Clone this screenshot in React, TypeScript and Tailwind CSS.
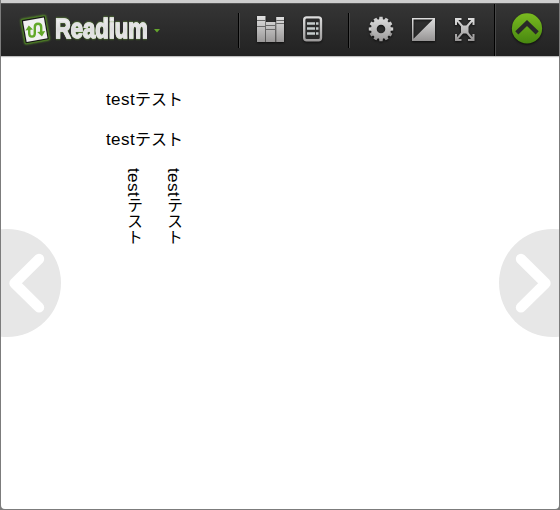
import React from 'react';

function Divider() {
  return <div className="h-[35px] w-[2px] shrink-0 border-l border-black bg-[#484848]" />;
}

function Metal({ id, y1, y2 }: { id: string; y1: number; y2: number }) {
  return (
    <defs>
      <linearGradient id={id} gradientUnits="userSpaceOnUse" x1="0" y1={y1} x2="0" y2={y2}>
        <stop offset="0" stopColor="#dedede" />
        <stop offset="1" stopColor="#969494" />
      </linearGradient>
    </defs>
  );
}

const shadow = 'overflow-visible drop-shadow-[0_1px_1px_rgba(0,0,0,0.7)]';

function LogoMark() {
  return (
    <svg width="34" height="34" viewBox="0 0 34 34" className="shrink-0 drop-shadow-[0_0_1px_#62a52a]">
      <g transform="rotate(-10 17 17)">
        <rect x="5" y="4.5" width="24.5" height="24.5" rx="1" fill="#171717" stroke="#4c7b26" strokeWidth="1" />
        <rect x="6.7" y="6.2" width="21.2" height="21.2" fill="#f0f0f0" />
      </g>
      <path d="M11.2 16v4.2c0 4.6 5.6 4.6 5.6 0v-6c0-4.6 6.4-4.6 6.4 0V19" fill="none" stroke="#62a829" strokeWidth="2.4" />
      <path d="M7.4 17.4l3.4-5 4.2 4.2zM19.2 19l8-.9-3.2 5.4z" fill="#62a829" />
    </svg>
  );
}

function LibraryIcon() {
  return (
    <svg width="28" height="28" viewBox="0 0 28 28" className={shadow}>
      <Metal id="books" y1={1} y2={27} />
      <path d="M0 0h8.5v26H0zM9 6h9.5v20H9zM19.2 1H27v25h-7.8z" fill="url(#books)" />
      <path d="M0 4.5h8.5M0 10.5h8.5M9 9.5h9.5M9 13.5h9.5M19.2 4.5H27M19.2 7.5H27" stroke="#686868" />
    </svg>
  );
}

function ContentsIcon() {
  return (
    <svg width="20" height="26" viewBox="0 0 20 26" className={shadow}>
      <Metal id="toc" y1={0} y2={26} />
      <rect x="1.2" y="0.4" width="16.8" height="22.8" rx="2.5" fill="#292929" stroke="url(#toc)" strokeWidth="2.4" />
      <path d="M4 6.5h8M13 6.5h2.5M4 11.5h8M13 11.5h2.5M4 16.5h8M13 16.5h2.5" stroke="#c5cbcc" strokeWidth="2.3" />
    </svg>
  );
}

function GearIcon() {
  const teeth = Array.from({ length: 12 }, (_, i) => i * 30);
  return (
    <svg width="26" height="26" viewBox="0 0 26 26" className={shadow}>
      <Metal id="gear" y1={0} y2={26} />
      {teeth.map((a) => (
        <path key={a} d="M10.9 4l.5-4.2h3.2L15.1 4z" fill={a > 90 && a < 270 ? '#9c9a9a' : '#cfcfcf'} transform={`rotate(${a} 13 12)`} />
      ))}
      <circle cx="13" cy="12" r="7.2" fill="none" stroke="url(#gear)" strokeWidth="5.8" />
    </svg>
  );
}

function ContrastIcon() {
  return (
    <svg width="24" height="24" viewBox="0 0 24 24" className={shadow}>
      <Metal id="contrast" y1={0} y2={23} />
      <path fillRule="evenodd" d="M0 0h23v23H0zM1.5 1.5v19.3L20.8 1.5z" fill="url(#contrast)" />
    </svg>
  );
}

function FullscreenIcon() {
  return (
    <svg width="20" height="24" viewBox="0 0 20 24" className={shadow}>
      <Metal id="full" y1={0} y2={23} />
      <path
        d="M1 7V1h5.5M13 1h5.5v6M1 16v6h5.5M13 22h5.5v-6M1.5 1.5l6 7M18 1.5l-6 7M1.5 21.5l6-7M18 21.5l-6-7"
        fill="none"
        stroke="url(#full)"
        strokeWidth="2"
      />
      <rect x="6" y="7.5" width="7.5" height="8" fill="url(#full)" />
    </svg>
  );
}

function CollapseIcon() {
  return (
    <svg width="32" height="32" viewBox="0 0 32 32" className={shadow}>
      <defs>
        <linearGradient id="green" x1="0" y1="0" x2="0" y2="1">
          <stop offset="0" stopColor="#7abb20" />
          <stop offset="1" stopColor="#478710" />
        </linearGradient>
      </defs>
      <circle cx="16" cy="14.4" r="15.1" fill="url(#green)" />
      <path d="M5.8 18.9L16 9l10.2 9.9" fill="none" stroke="#292929" strokeWidth="4.4" />
    </svg>
  );
}

function PageArrow({ flip = false }: { flip?: boolean }) {
  return (
    <svg width="60" height="108" viewBox="0 0 60 108" className={flip ? 'block -scale-x-100' : 'block'}>
      <circle cx="6" cy="54" r="54" fill="#e7e7e7" />
      <path d="M38 30L13.5 54.2 38 78.4" fill="none" stroke="#fff" strokeWidth="10.4" strokeLinecap="round" strokeLinejoin="round" />
    </svg>
  );
}

function Sample() {
  return (
    <>
      <span className="text-[17px] tracking-[0.4px]">test</span>テスト
    </>
  );
}

export default function App() {
  return (
    <div className="h-[510px] w-[560px] overflow-hidden bg-[#7c7c7c] px-px pb-px">
      <div className="flex h-[509px] flex-col overflow-hidden rounded-b-[4px] bg-white">
        <div className="h-[3px] shrink-0 bg-[#cecece]" />
        <header className="flex h-[53px] shrink-0 items-center border-t border-[#555] bg-linear-to-b from-[#353535] to-[#222] shadow-[0_1px_1px_rgba(0,0,0,0.25)]">
          <div className="flex w-[237px] items-center pl-[17px]">
            <LogoMark />
            <div className="ml-[3px] w-[93px]">
              <div className="-mt-[2px] w-max origin-left scale-x-[0.785] bg-linear-to-b from-white via-[#dcdcdc] to-[#f2f2f2] bg-clip-text font-['Liberation_Sans',sans-serif] text-[28px] leading-8 font-bold text-transparent drop-shadow-[0_0_1px_#65a42f] [-webkit-text-stroke:1.3px_#e2e2e2]">
                Readium
              </div>
            </div>
            <svg width="6" height="4" viewBox="0 0 6 4" className="ml-[6px] mt-[2px]">
              <path d="M0 0h6L3 3.5z" fill="#65a52d" />
            </svg>
          </div>
          <Divider />
          <div className="flex w-[108px] items-center gap-[18px] pl-[17px]">
            <LibraryIcon />
            <ContentsIcon />
          </div>
          <Divider />
          <div className="flex w-[144px] items-center pl-[18px]">
            <GearIcon />
            <div className="ml-[18px]"><ContrastIcon /></div>
            <div className="ml-[19px]"><FullscreenIcon /></div>
          </div>
          <div className="h-[52px] w-[2px] shrink-0 border-l border-black bg-[#484848]" />
          <div className="pl-[15px]"><CollapseIcon /></div>
        </header>
        <main className="flex grow items-start justify-between font-['Liberation_Sans','Noto_Sans_CJK_JP',sans-serif] text-[16px] text-black">
          <div className="pt-[173px]"><PageArrow /></div>
          <div className="mr-auto ml-[45px] pt-[32px]">
            <p className="h-10 leading-6"><Sample /></p>
            <p className="h-10 leading-6"><Sample /></p>
            <div className="ml-[15px] flex gap-4">
              <p className="w-6 leading-6 [writing-mode:vertical-rl]"><Sample /></p>
              <p className="w-6 leading-6 [writing-mode:vertical-rl]"><Sample /></p>
            </div>
          </div>
          <div className="pt-[173px]"><PageArrow flip /></div>
        </main>
      </div>
    </div>
  );
}
